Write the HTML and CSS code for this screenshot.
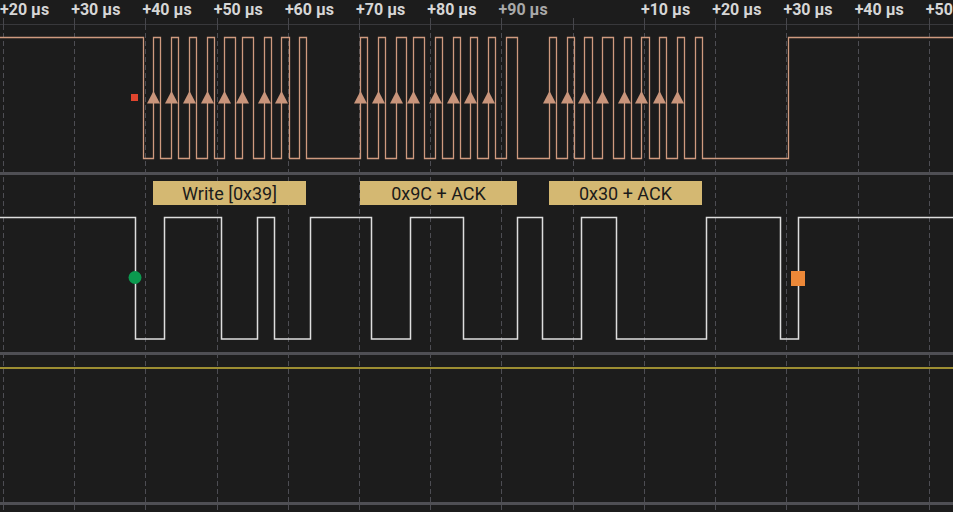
FILE: index.html
```html
<!DOCTYPE html>
<html>
	<head>
		<title>Capture - I2C</title>
		<link rel="stylesheet" href="styles.css">
	</head>
	<body>
	<div class="view">
		<div class="ruler">
			<span class="tick">+20 µs</span>
			<span class="tick">+30 µs</span>
			<span class="tick">+40 µs</span>
			<span class="tick">+50 µs</span>
			<span class="tick">+60 µs</span>
			<span class="tick">+70 µs</span>
			<span class="tick">+80 µs</span>
			<span class="tick dim">+90 µs</span>
			<span class="tick"></span>
			<span class="tick">+10 µs</span>
			<span class="tick">+20 µs</span>
			<span class="tick">+30 µs</span>
			<span class="tick">+40 µs</span>
			<span class="tick">+50 µs</span>
		</div>

		<!-- SCL -->
		<div class="channel ch-clock">
			<svg class="wave" width="953" height="147" viewBox="0 0 953 147">
				<defs>
					<polygon id="edge" points="-6.5,78.5 0,66 6.5,78.5" />
				</defs>
				<path class="scl" d="M0 12.5 H143.5 V133.5 H153.5 V12.5 H160.5 V133.5 H171.5 V12.5 H178.5 V133.5 H189.5 V12.5 H196.5 V133.5 H207.5 V12.5 H214.5 V133.5 H224.5 V12.5 H235.5 V133.5 H242.5 V12.5 H253.5 V133.5 H264.5 V12.5 H271.5 V133.5 H281.5 V12.5 H289.5 V133.5 H299.5 V12.5 H306.5 V133.5
					H360.5 V12.5 H367.5 V133.5 H378.5 V12.5 H385.5 V133.5 H396.5 V12.5 H406.5 V133.5 H413.5 V12.5 H424.5 V133.5 H435.5 V12.5 H442.5 V133.5 H453.5 V12.5 H460.5 V133.5 H470.5 V12.5 H477.5 V133.5 H488.5 V12.5 H495.5 V133.5 H506.5 V12.5 H517.5 V133.5
					H549.5 V12.5 H556.5 V133.5 H567.5 V12.5 H574.5 V133.5 H584.5 V12.5 H592.5 V133.5 H602.5 V12.5 H613.5 V133.5 H624.5 V12.5 H631.5 V133.5 H641.5 V12.5 H649.5 V133.5 H659.5 V12.5 H666.5 V133.5 H677.5 V12.5 H684.5 V133.5 H695.5 V12.5 H702.5 V133.5
					H788.5 V12.5 H953" />
				<g class="edges">
					<use href="#edge" x="153.5" /><use href="#edge" x="171.5" /><use href="#edge" x="189.5" /><use href="#edge" x="207.5" />
					<use href="#edge" x="224.5" /><use href="#edge" x="242.5" /><use href="#edge" x="264.5" /><use href="#edge" x="281.5" />
					<use href="#edge" x="360.5" /><use href="#edge" x="378.5" /><use href="#edge" x="396.5" /><use href="#edge" x="413.5" />
					<use href="#edge" x="435.5" /><use href="#edge" x="453.5" /><use href="#edge" x="470.5" /><use href="#edge" x="488.5" />
					<use href="#edge" x="549.5" /><use href="#edge" x="567.5" /><use href="#edge" x="584.5" /><use href="#edge" x="602.5" />
					<use href="#edge" x="624.5" /><use href="#edge" x="641.5" /><use href="#edge" x="659.5" /><use href="#edge" x="677.5" />
				</g>
				<rect class="marker-err" x="131" y="69" width="7" height="7" />
			</svg>
		</div>

		<!-- SDA + decoded frames -->
		<div class="channel ch-data">
			<svg class="wave" width="953" height="177" viewBox="0 0 953 177">
				<g class="frame">
					<rect x="153" y="6" width="153" height="24" />
					<text x="229.5" y="24.5">Write [0x39]</text>
				</g>
				<g class="frame">
					<rect x="360" y="6" width="157" height="24" />
					<text x="438.5" y="24.5">0x9C + ACK</text>
				</g>
				<g class="frame">
					<rect x="549" y="6" width="153" height="24" />
					<text x="625.5" y="24.5">0x30 + ACK</text>
				</g>
				<path class="sda" d="M0 42.5 H135.5 V164 H164.5 V42.5 H221.5 V164 H257.5 V42.5 H274.5 V164 H310.5 V42.5 H371.5 V164 H410.5 V42.5 H463.5 V164 H517.5 V42.5 H542.5 V164 H581.5 V42.5 H616.5 V164 H706.5 V42.5 H780.5 V164 H798.5 V42.5 H953" />
				<circle class="marker-start" cx="135" cy="102.5" r="6.5" />
				<rect class="marker-stop" x="791" y="96" width="14" height="15" />
			</svg>
		</div>

		<!-- analog / idle -->
		<div class="channel ch-idle">
			<svg class="wave" width="953" height="147" viewBox="0 0 953 147">
				<line class="level" x1="0" y1="13" x2="953" y2="13" />
			</svg>
		</div>

		<svg class="grid" width="953" height="512" viewBox="0 0 953 512">
			<g class="grid-ticks">
				<line x1="3.5" y1="18" x2="3.5" y2="30" /><line x1="74.5" y1="18" x2="74.5" y2="30" />
				<line x1="145.5" y1="18" x2="145.5" y2="30" /><line x1="217.5" y1="18" x2="217.5" y2="30" />
				<line x1="288.5" y1="18" x2="288.5" y2="30" /><line x1="359.5" y1="18" x2="359.5" y2="30" />
				<line x1="430.5" y1="18" x2="430.5" y2="30" /><line x1="501.5" y1="18" x2="501.5" y2="30" />
				<line x1="573.5" y1="18" x2="573.5" y2="30" /><line x1="644.5" y1="18" x2="644.5" y2="30" />
				<line x1="715.5" y1="18" x2="715.5" y2="30" /><line x1="786.5" y1="18" x2="786.5" y2="30" />
				<line x1="858.5" y1="18" x2="858.5" y2="30" /><line x1="929.5" y1="18" x2="929.5" y2="30" />
			</g>
			<g class="grid-lines">
				<line x1="3.5" y1="33" x2="3.5" y2="512" /><line x1="74.5" y1="33" x2="74.5" y2="512" />
				<line x1="145.5" y1="33" x2="145.5" y2="512" /><line x1="217.5" y1="33" x2="217.5" y2="512" />
				<line x1="288.5" y1="33" x2="288.5" y2="512" /><line x1="359.5" y1="33" x2="359.5" y2="512" />
				<line x1="430.5" y1="33" x2="430.5" y2="512" /><line x1="501.5" y1="33" x2="501.5" y2="512" />
				<line x1="573.5" y1="33" x2="573.5" y2="512" /><line x1="644.5" y1="33" x2="644.5" y2="512" />
				<line x1="715.5" y1="33" x2="715.5" y2="512" /><line x1="786.5" y1="33" x2="786.5" y2="512" />
				<line x1="858.5" y1="33" x2="858.5" y2="512" /><line x1="929.5" y1="33" x2="929.5" y2="512" />
			</g>
		</svg>
	</div>
	</body>
</html>
```
FILE: styles.css
```css
body
{
	margin: 0;
	padding: 0;
	background: #1c1c1c;
	font-family: Roboto, "Liberation Sans", Arial, sans-serif;
	overflow: hidden;
	cursor: default;
}

.view
{
	position: relative;
	width: 953px;
	height: 512px;
	display: flex;
	flex-direction: column;
	overflow: hidden;
}

/* time ruler */
.ruler
{
	display: flex;
	height: 24px;
	flex: none;
	border-bottom: 1px solid #38383b;
	white-space: nowrap;
}
.tick
{
	flex: none;
	width: 71.23px;
	font-size: 16px;
	font-weight: bold;
	line-height: 20px;
	color: #d6d6d6;
}
.tick.dim
{
	color: #a9a9a9;
}

/* channel rows */
.channel
{
	flex: none;
	border-bottom: 3px solid #4f4f54;
}
.ch-clock { height: 147px; }
.ch-data  { height: 177px; }
.ch-idle  { height: 147px; }

.wave
{
	display: block;
	position: relative;
	z-index: 2;
}

.scl
{
	fill: none;
	stroke: #cf9a7f;
	stroke-width: 1.3;
}
.edges use
{
	fill: #c9957b;
}
.marker-err
{
	fill: #e0452e;
}

.sda
{
	fill: none;
	stroke: #dedede;
	stroke-width: 1.5;
}
.marker-start
{
	fill: #0b9a4f;
}
.marker-stop
{
	fill: #ec8838;
}

.frame rect
{
	fill: #d4b872;
}
.frame text
{
	font-family: Roboto, "Liberation Sans", Arial, sans-serif;
	font-size: 18px;
	fill: #1b1b1b;
	text-anchor: middle;
}

.level
{
	stroke: #c9b53a;
	stroke-width: 1.6;
}

/* vertical time grid */
.grid
{
	position: absolute;
	top: 0;
	left: 0;
	z-index: 1;
	pointer-events: none;
}
.grid-ticks line
{
	stroke: #47474c;
	stroke-width: 1;
}
.grid-lines line
{
	stroke: #4d4d53;
	stroke-width: 1;
	stroke-dasharray: 5 3;
}
```
